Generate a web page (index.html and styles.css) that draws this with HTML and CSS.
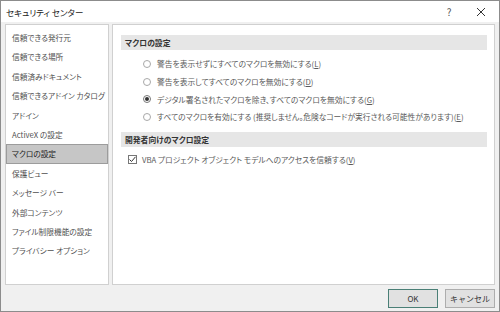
FILE: index.html
```html
<!DOCTYPE html>
<html lang="ja">
<head>
    <meta charset="UTF-8">
    <title>セキュリティ センター</title>
    <link rel="stylesheet" href="styles.css">
</head>
<body>
    <div class="window">
        <div class="titlebar">
            <span class="title">セキュリティ センター</span>
            <span class="help">?</span>
            <span class="close">
                <svg width="10" height="10" viewBox="0 0 10 10"><path d="M1 1L9 9M9 1L1 9" stroke="#333" stroke-width="1"/></svg>
            </span>
        </div>

        <div class="main">
            <ul class="nav">
                <li>信頼できる発行元</li>
                <li>信頼できる場所</li>
                <li>信頼済みドキュメント</li>
                <li>信頼できるアドイン カタログ</li>
                <li>アドイン</li>
                <li>ActiveX の設定</li>
                <li class="selected">マクロの設定</li>
                <li>保護ビュー</li>
                <li>メッセージ バー</li>
                <li>外部コンテンツ</li>
                <li>ファイル制限機能の設定</li>
                <li>プライバシー オプション</li>
            </ul>

            <div class="content">
                <div class="section-head">マクロの設定</div>
                <div class="options">
                    <div class="option"><span class="radio"></span>警告を表示せずにすべてのマクロを無効にする(<u>L</u>)</div>
                    <div class="option"><span class="radio"></span>警告を表示してすべてのマクロを無効にする(<u>D</u>)</div>
                    <div class="option"><span class="radio checked"></span>デジタル署名されたマクロを除き、すべてのマクロを無効にする(<u>G</u>)</div>
                    <div class="option"><span class="radio"></span>すべてのマクロを有効にする (推奨しません。危険なコードが実行される可能性があります)(<u>E</u>)</div>
                </div>

                <div class="section-head second">開発者向けのマクロ設定</div>
                <div class="check-row">
                    <span class="checkbox">
                        <svg width="9" height="9" viewBox="0 0 9 9"><path d="M1.5 4.5L3.5 6.5L7.5 1.8" fill="none" stroke="#333" stroke-width="1"/></svg>
                    </span>
                    VBA プロジェクト オブジェクト モデルへのアクセスを信頼する(<u>V</u>)
                </div>
            </div>
        </div>

        <div class="footer">
            <button class="button default">OK</button>
            <button class="button">キャンセル</button>
        </div>
    </div>
</body>
</html>
```

FILE: styles.css
```css
body {
    margin: 0;
    font-family: "Noto Sans CJK JP", "Noto Sans", sans-serif;
    font-feature-settings: "palt";
}
.window {
    width: 500px;
    height: 312px;
    box-sizing: border-box;
    border: 1px solid #8c8c8c;
    background: #f0f0f0;
    display: flex;
    flex-direction: column;
}
.titlebar {
    height: 21px;
    background: #fff;
    display: flex;
    align-items: center;
    padding: 0 5px;
    font-size: 8.5px;
    color: #222;
}
.title {
    flex: 1;
}
.help {
    width: 14px;
    text-align: center;
    font-size: 10px;
    color: #555;
    margin-right: 18px;
}
.close {
    width: 14px;
    display: flex;
    justify-content: center;
    margin-right: 6px;
}
.main {
    flex: 1;
    display: flex;
    gap: 3px;
    padding: 2px 4px 0 4px;
}
.nav {
    width: 104px;
    box-sizing: border-box;
    margin: 0;
    padding: 3px 0 0 0;
    list-style: none;
    background: #fff;
    border: 1px solid #d0d0d0;
}
.nav li {
    height: 19.4px;
    line-height: 19.4px;
    padding-left: 6px;
    font-size: 7.7px;
    color: #505050;
    white-space: nowrap;
    box-sizing: border-box;
}
.nav li.selected {
    background: #c6c6c6;
    border: 1px solid #9c9c9c;
    line-height: 17.4px;
    padding-left: 5px;
    color: #222;
}
.content {
    flex: 1;
    background: #fff;
    border: 1px solid #d0d0d0;
    padding: 10px 7px 0 8px;
}
.section-head {
    height: 15px;
    line-height: 15px;
    background: #e6e6e6;
    padding-left: 4px;
    font-size: 7.8px;
    font-weight: bold;
    color: #333;
}
.section-head.second {
    margin-top: 6px;
}
.options {
    margin-top: 5px;
}
.option {
    height: 17.7px;
    display: flex;
    align-items: center;
    padding-left: 22px;
    font-size: 7.75px;
    color: #5a5a5a;
    white-space: nowrap;
}
.radio {
    width: 8px;
    height: 8px;
    box-sizing: border-box;
    border: 1px solid #a8a8a8;
    border-radius: 50%;
    margin-right: 6px;
    display: flex;
    align-items: center;
    justify-content: center;
}
.radio.checked {
    border-color: #777;
}
.radio.checked::after {
    content: "";
    width: 4px;
    height: 4px;
    border-radius: 50%;
    background: #333;
}
.check-row {
    margin-top: 4px;
    height: 18px;
    display: flex;
    align-items: center;
    padding-left: 7px;
    font-size: 7.75px;
    color: #5a5a5a;
    white-space: nowrap;
}
.checkbox {
    width: 9px;
    height: 9px;
    box-sizing: border-box;
    border: 1px solid #777;
    margin-right: 5px;
    display: flex;
}
.checkbox svg {
    margin: -1px;
}
.footer {
    height: 26px;
    display: flex;
    justify-content: flex-end;
    align-items: center;
    gap: 7px;
    padding: 0 4px 0 0;
}
.button {
    width: 50px;
    height: 19px;
    padding: 0;
    font-family: inherit;
    font-size: 8px;
    color: #333;
    background: #e1e1e1;
    border: 1px solid #adadad;
}
.button.default {
    border-color: #4a7f76;
}
```
